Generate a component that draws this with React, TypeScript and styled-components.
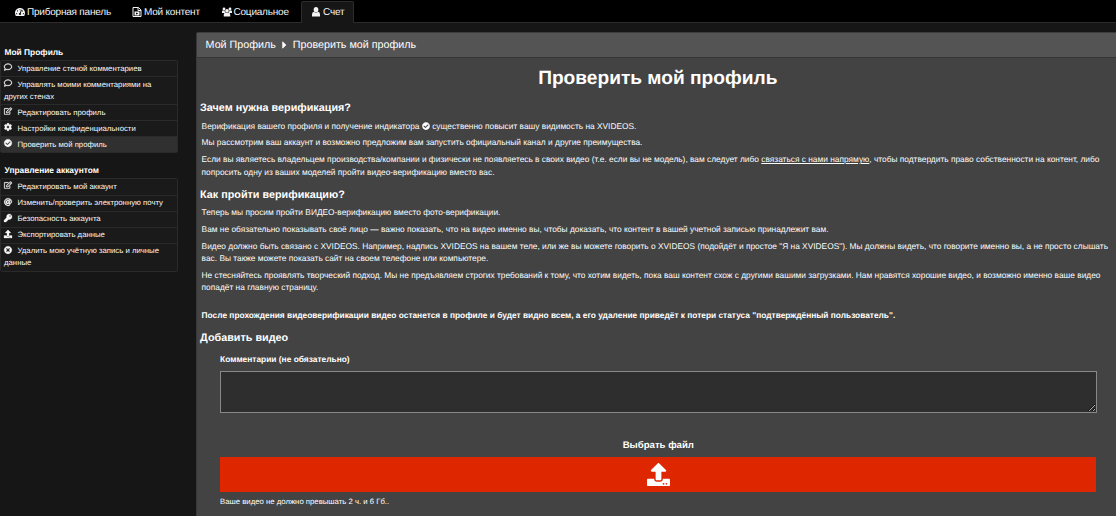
import React from "react";
import styled, { createGlobalStyle } from "styled-components";
import {
  FaTachometerAlt, FaRegComment, FaRegEdit, FaCog,
  FaCheckCircle, FaAt, FaKey, FaUpload, FaTimesCircle, FaCaretRight,
} from "react-icons/fa";

const GlobalStyle = createGlobalStyle`
  *, *::before, *::after { box-sizing: border-box; }
  html, body { margin: 0; background: #161616; overflow: hidden; }
  body {
    font-family: "Liberation Sans", Arial, sans-serif;
    color: #fff;
    text-rendering: geometricPrecision;
  }
  h1, h2, h3, p, ul { margin: 0; padding: 0; }
`;

const Page = styled.div`
  width: 1116px;
  height: 516px;
  overflow: hidden;
  display: flex;
  flex-direction: column;
`;

const TopNav = styled.nav`
  flex: none;
  height: 23px;
  padding: 1px 0 0 4px;
  display: flex;
  background: #000;
  box-shadow: inset 0 -1px #2c2c2c;
`;

const Tab = styled.a<{ $width: number; $active?: boolean }>`
  width: ${(p) => p.$width}px;
  padding: 0 0 1px ${(p) => (p.$active ? 9 : 10)}px;
  display: flex;
  align-items: center;
  gap: 2px;
  white-space: nowrap;
  font-size: 10px;
  letter-spacing: -0.21px;
  color: #f4f4f4;
  border: 1px solid ${(p) => (p.$active ? "#2c2c2c" : "transparent")};
  border-bottom: 0;
  border-radius: 2px 2px 0 0;
  background: ${(p) => (p.$active ? "#161616" : "transparent")};
  svg { width: 10px; height: 10px; flex: none; }
`;

const Body = styled.div`
  flex: 1;
  min-height: 0;
  display: flex;
`;

const Sidebar = styled.aside`
  flex: none;
  width: 195.6px;
  padding-top: 22px;
`;

const MenuTitle = styled.h3`
  height: 15px;
  padding-left: 4.5px;
  font-size: 8.4px;
  line-height: 14px;
`;

const MenuList = styled.ul`
  width: 178px;
  margin-bottom: 10px;
  list-style: none;
  border: 1px solid #2a2a2a;
  border-radius: 2px;
`;

const MenuItem = styled.li<{ $active?: boolean }>`
  padding: 1.5px 0 1.6px 3px;
  font-size: 7.78px;
  line-height: 12px;
  white-space: nowrap;
  color: #f8f8f8;
  background: ${(p) => (p.$active ? "#303030" : "#1a1a1a")};
  & + & { border-top: 1px solid #2a2a2a; }
  svg {
    width: 8px;
    height: 8px;
    margin-right: 5.5px;
    vertical-align: -0.5px;
    overflow: visible;
    stroke: currentColor;
    stroke-width: 16px;
  }
`;

const Main = styled.main`
  flex: 1;
  margin-top: 9px;
  border-left: 1px solid #383838;
  border-top: 1px solid #3c3c3c;
  border-radius: 2px 0 0 0;
  background: #434343;
`;

const Breadcrumb = styled.div`
  height: 25px;
  padding-left: 9px;
  display: flex;
  align-items: center;
  gap: 5px;
  font-size: 10.73px;
  white-space: nowrap;
  background: #545454;
  border-bottom: 1px solid #363636;
  svg { width: 7px; height: 12px; }
`;

const Title = styled.h1`
  height: 40px;
  padding-left: 3px;
  font-size: 19.15px;
  line-height: 41px;
  text-align: center;
`;

const Heading = styled.h2<{ $top: number; $height: number }>`
  margin-top: ${(p) => p.$top}px;
  padding-left: 3.5px;
  height: ${(p) => p.$height}px;
  font-size: 10.8px;
  line-height: 18px;
`;

const Paragraph = styled.p<{ $bold?: boolean }>`
  margin-bottom: 4.4px;
  padding-left: 5px;
  font-size: 8.35px;
  line-height: 12.4px;
  white-space: nowrap;
  color: #fcfcfc;
  ${(p) => p.$bold && "margin-top: 15.5px; font-weight: bold; color: #fff;"}
  svg { width: 8px; height: 8px; vertical-align: -1.4px; }
`;

const Link = styled.a`
  text-decoration: underline;
`;

const Form = styled.div`
  padding: 0 19px 0 23px;
  display: flex;
  flex-direction: column;
`;

const Label = styled.label`
  height: 20px;
  padding-left: 0.5px;
  font-size: 8.4px;
  line-height: 17px;
  font-weight: bold;
`;

const Comment = styled.textarea`
  display: block;
  width: 100%;
  height: 42px;
  background: #2e2e2e;
  border: 1px solid #888;
  outline: none;
  color: #fff;
  resize: vertical;
`;

const PickTitle = styled.div`
  margin-top: 24px;
  height: 20px;
  font-size: 9.6px;
  line-height: 18px;
  font-weight: bold;
  text-align: center;
`;

const UploadButton = styled.button`
  height: 34.5px;
  margin: 0 0.6px 0 0.4px;
  padding: 0;
  display: flex;
  align-items: center;
  justify-content: center;
  background: #de2600;
  color: #fff;
  border: 0;
  svg { width: 23px; height: 23px; }
`;

const Note = styled.div`
  margin-top: 4px;
  padding-left: 0.5px;
  font-size: 7.75px;
  line-height: 12px;
`;

const FilmFileIcon = () => (
  <svg viewBox="0 0 20 20" fill="none" stroke="currentColor" strokeWidth="2">
    <path d="M2 1h11l5 5v13H2z" />
    <path d="M12 1v6h6" />
    <path d="M5 9h10v8H5z" fill="currentColor" stroke="none" />
    <path d="M8 11l4.5 2L8 15z" fill="#000" stroke="none" />
  </svg>
);

const GroupIcon = () => (
  <svg viewBox="0 0 20 18" fill="currentColor">
    <circle cx="4" cy="3" r="2.8" />
    <circle cx="16" cy="3" r="2.8" />
    <circle cx="10" cy="6.5" r="3.7" />
    <path d="M0 11V8q0-2 2-2h3q1 5 3 5z" />
    <path d="M20 11V8q0-2-2-2h-3q-1 5-3 5z" />
    <path d="M3.5 18v-3.5Q3.5 10.5 7 10.5h6q3.5 0 3.5 4V18z" />
  </svg>
);

const PersonIcon = () => (
  <svg viewBox="0 0 20 20" fill="currentColor">
    <ellipse cx="10" cy="5.5" rx="4.7" ry="5.5" />
    <path d="M2 19v-4q0-5 4-5.5 4 3.5 8 0 4 .5 4 5.5v4z" />
  </svg>
);

export default function App() {
  return (
    <>
      <GlobalStyle />
      <Page>
        <TopNav>
          <Tab $width={117}><FaTachometerAlt />Приборная панель</Tab>
          <Tab $width={89.5}><FilmFileIcon />Мой контент</Tab>
          <Tab $width={90.5}><GroupIcon />Социальное</Tab>
          <Tab $width={53} $active><PersonIcon />Счет</Tab>
        </TopNav>
        <Body>
          <Sidebar>
            <MenuTitle>Мой Профиль</MenuTitle>
            <MenuList>
              <MenuItem><FaRegComment />Управление стеной комментариев</MenuItem>
              <MenuItem><FaRegComment />Управлять моими комментариями на<br />других стенах</MenuItem>
              <MenuItem><FaRegEdit />Редактировать профиль</MenuItem>
              <MenuItem><FaCog />Настройки конфиденциальности</MenuItem>
              <MenuItem $active><FaCheckCircle />Проверить мой профиль</MenuItem>
            </MenuList>
            <MenuTitle>Управление аккаунтом</MenuTitle>
            <MenuList>
              <MenuItem><FaRegEdit />Редактировать мой аккаунт</MenuItem>
              <MenuItem><FaAt />Изменить/проверить электронную почту</MenuItem>
              <MenuItem><FaKey />Безопасность аккаунта</MenuItem>
              <MenuItem><FaUpload />Экспортировать данные</MenuItem>
              <MenuItem><FaTimesCircle />Удалить мою учётную запись и личные<br />данные</MenuItem>
            </MenuList>
          </Sidebar>
          <Main>
            <Breadcrumb>Мой Профиль<FaCaretRight />Проверить мой профиль</Breadcrumb>
            <Title>Проверить мой профиль</Title>
            <Heading $top={1} $height={20.5}>Зачем нужна верификация?</Heading>
            <Paragraph>Верификация вашего профиля и получение индикатора <FaCheckCircle /> существенно повысит вашу видимость на XVIDEOS.</Paragraph>
            <Paragraph>Мы рассмотрим ваш аккаунт и возможно предложим вам запустить официальный канал и другие преимущества.</Paragraph>
            <Paragraph>
              Если вы являетесь владельцем производства/компании и физически не появляетесь в своих видео (т.е. если вы не модель), вам следует либо <Link>связаться с нами напрямую</Link>, чтобы подтвердить право собственности на контент, либо
              <br />попросить одну из ваших моделей пройти видео-верификацию вместо вас.
            </Paragraph>
            <Heading $top={7.8} $height={20.3}>Как пройти верификацию?</Heading>
            <Paragraph>Теперь мы просим пройти ВИДЕО-верификацию вместо фото-верификации.</Paragraph>
            <Paragraph>Вам не обязательно показывать своё лицо — важно показать, что на видео именно вы, чтобы доказать, что контент в вашей учетной записью принадлежит вам.</Paragraph>
            <Paragraph>
              Видео должно быть связано с XVIDEOS. Например, надпись XVIDEOS на вашем теле, или же вы можете говорить о XVIDEOS (подойдёт и простое "Я на XVIDEOS"). Мы должны видеть, что говорите именно вы, а не просто слышать
              <br />вас. Вы также можете показать сайт на своем телефоне или компьютере.
            </Paragraph>
            <Paragraph>
              Не стесняйтесь проявлять творческий подход. Мы не предъявляем строгих требований к тому, что хотим видеть, пока ваш контент схож с другими вашими загрузками. Нам нравятся хорошие видео, и возможно именно ваше видео
              <br />попадёт на главную страницу.
            </Paragraph>
            <Paragraph $bold>После прохождения видеоверификации видео останется в профиле и будет видно всем, а его удаление приведёт к потери статуса "подтверждённый пользователь".</Paragraph>
            <Heading $top={7.6} $height={22.2}>Добавить видео</Heading>
            <Form>
              <Label>Комментарии (не обязательно)</Label>
              <Comment />
              <PickTitle>Выбрать файл</PickTitle>
              <UploadButton><FaUpload /></UploadButton>
              <Note>Ваше видео не должно превышать 2 ч. и 6 Гб..</Note>
            </Form>
          </Main>
        </Body>
      </Page>
    </>
  );
}
